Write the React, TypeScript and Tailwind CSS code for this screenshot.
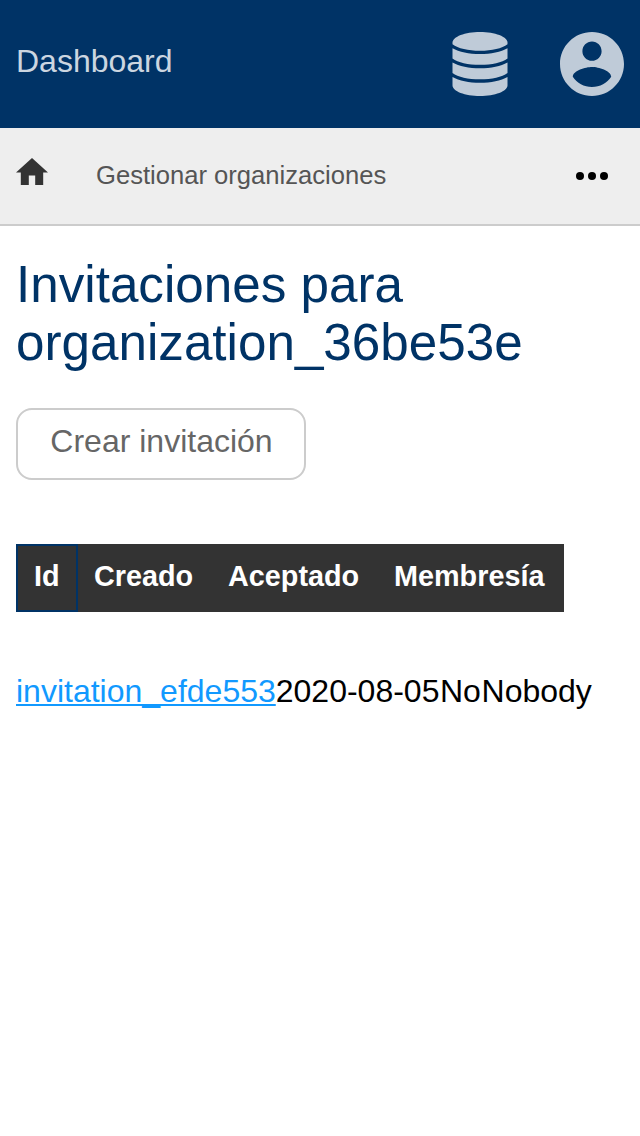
function DatabaseIcon() {
  return (
    <svg viewBox="0 0 56 64" className="h-16 w-14 fill-[#bfcbd8]" aria-hidden="true">
      <path d="M28 0C43 0 55.500 4.700 55.500 10.500V12.300C50 16.500 40 18.800 28 18.800S6 16.500 .5 12.300V10.500C.5 4.700 13 0 28 0Z" />
      <path d="M.5 16.200C7 20.100 17 22 28 22S49 20.100 55.500 16.200V26.500C50 30.600 40 32.800 28 32.800S6 30.600 .5 26.500Z" />
      <path d="M.5 30.500C7 34.400 17 36.300 28 36.300S49 34.400 55.500 30.500V41C50 45.100 40 47.300 28 47.300S6 45.100 .5 41Z" />
      <path d="M.5 45C7 48.900 17 50.800 28 50.800S49 48.900 55.500 45V53.500C55.500 59.300 43 64 28 64S.5 59.300 .5 53.500Z" />
    </svg>
  );
}

function AccountIcon() {
  return (
    <svg viewBox="2 2 20 20" className="size-16 fill-[#bfcbd8]" aria-hidden="true">
      <path d="M12 2C6.480 2 2 6.480 2 12s4.480 10 10 10 10-4.480 10-10S17.520 2 12 2zm0 3c1.660 0 3 1.340 3 3s-1.340 3-3 3-3-1.340-3-3 1.340-3 3-3zm0 14.200c-2.500 0-4.710-1.280-6-3.220.030-1.990 4-3.080 6-3.080 1.990 0 5.970 1.090 6 3.080-1.290 1.940-3.500 3.220-6 3.220z" />
    </svg>
  );
}

export default function App() {
  return (
    <div className="min-h-[1136px] bg-white font-['Liberation_Sans',Arial,sans-serif] text-[32px] leading-[36px] text-black">
      <header className="flex h-32 items-center justify-between bg-[#003366] px-4">
        <a className="pb-[6px] text-[#ccd6e0]">Dashboard</a>
        <div className="flex gap-[52px]">
          <DatabaseIcon />
          <AccountIcon />
        </div>
      </header>

      <nav className="flex h-[98px] items-center border-b-2 border-[#cccccc] bg-[#eeeeee] pr-8 pl-4">
        <svg viewBox="2 3 20 17" className="mb-[8.400px] h-[27.2px] w-8 fill-[#333333]" aria-hidden="true">
          <path d="M10 20v-6h4v6h5v-8h3L12 3 2 12h3v8z" />
        </svg>
        <span className="ml-12 pb-0.5 text-[25.6px] leading-[30px] text-[#555555]">Gestionar organizaciones</span>
        <svg viewBox="0 0 32 8" className="ml-auto h-2 w-8 fill-black" aria-hidden="true">
          <circle cx="4" cy="4" r="4" />
          <circle cx="16" cy="4" r="4" />
          <circle cx="28" cy="4" r="4" />
        </svg>
      </nav>

      <main className="px-4 pt-[30px]">
        <h1 className="text-[51.2px] leading-[58px] text-[#003366]">
          Invitaciones para
          <br />
          organization_36be53e
        </h1>

        <button className="mt-9 flex h-[72px] w-[290px] justify-center rounded-2xl border-2 border-[#cccccc] pt-[13px] pl-px text-[#666666]">
          Crear invitación
        </button>

        <div className="mt-16 flex h-[68px] w-[548px] bg-[#333333] text-[28.8px] leading-[33px] font-bold text-white">
          <div className="w-[62px] border-2 border-[#003366] pt-[14px] pl-4">Id</div>
          <div className="w-[134px] pt-4 pl-4">Creado</div>
          <div className="w-[166px] pt-4 pl-4">Aceptado</div>
          <div className="pt-4 pl-4">Membresía</div>
        </div>

        <div className="mt-[61px] flex">
          <a className="text-[#1199ff] underline decoration-2 underline-offset-[2px]">invitation_efde553</a>
          <span className="pr-[0.5px]">2020-08-05</span>
          <span className="pr-[0.7px]">No</span>
          <span>Nobody</span>
        </div>
      </main>
    </div>
  );
}
